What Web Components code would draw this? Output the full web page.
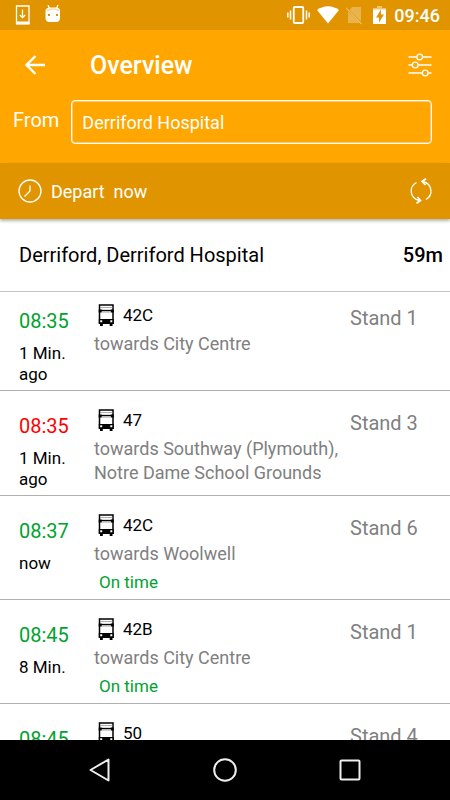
<!DOCTYPE html>
<html lang="en">
<head>
<meta charset="UTF-8">
<meta name="viewport" content="width=device-width, initial-scale=1">
<title>Overview</title>
<style>
    body {
        margin: 0;
        height: 100vh;
        display: flex;
        flex-direction: column;
        overflow: hidden;
        background-color: #fff;
        color: #000;
        font-family: Roboto, "Liberation Sans", sans-serif;
    }
    main {
        flex: 1;
        min-height: 0;
        overflow: hidden;
    }
</style>
</head>
<body>
    <status-bar>09:46</status-bar>
    <search-header value="Derriford Hospital">
        <span slot="title">Overview</span>
        <span slot="label">From</span>
    </search-header>
    <depart-bar>Depart&nbsp; now</depart-bar>
    <main>
        <stop-heading>
            <span slot="name">Derriford, Derriford Hospital</span>
            <span slot="distance">59m</span>
        </stop-heading>
        <departure-row time="08:35" line="42C" stand="Stand 1">
            <span slot="wait">1 Min. ago</span>
            <span slot="direction">towards City Centre</span>
        </departure-row>
        <departure-row time="08:35" line="47" stand="Stand 3" late>
            <span slot="wait">1 Min. ago</span>
            <span slot="direction">towards Southway (Plymouth), Notre Dame School Grounds</span>
        </departure-row>
        <departure-row time="08:37" line="42C" stand="Stand 6">
            <span slot="wait">now</span>
            <span slot="direction">towards Woolwell</span>
            <span slot="status">On time</span>
        </departure-row>
        <departure-row time="08:45" line="42B" stand="Stand 1">
            <span slot="wait">8 Min.</span>
            <span slot="direction">towards City Centre</span>
            <span slot="status">On time</span>
        </departure-row>
        <departure-row time="08:45" line="50" stand="Stand 4"></departure-row>
    </main>
    <nav-bar></nav-bar>

<script>
class StatusBar extends HTMLElement {
    constructor() {
        super();
        this.attachShadow({ mode: 'open' });

        this.shadowRoot.innerHTML = `
            <style>
                :host {
                    display: flex;
                    align-items: center;
                    justify-content: space-between;
                    flex: none;
                    height: 30px;
                    padding: 0 10px 0 15px;
                    background-color: #e09400;
                    color: #fff;
                    font-size: 18px;
                    font-weight: 500;
                }
                .group {
                    display: flex;
                    align-items: center;
                }
                .left { gap: 14px; }
                .right { gap: 7px; }
                svg { display: block; }
            </style>
            <div class="group left">
                <svg width="16" height="20" viewBox="0 0 16 20" fill="none" stroke="#fff">
                    <path d="M1.500 1v17.500h12.500V1z" stroke-width="1.300"/>
                    <path d="M1 16.500h13.500v3H1z" fill="#fff" stroke="none"/>
                    <path d="M7.500 4.500v8M4.800 10l2.700 2.700 2.700-2.700" stroke-width="1.300"/>
                </svg>
                <svg width="16" height="20" viewBox="0 0 16 20">
                    <path d="M3 0l1.500 3.500M13 0l-1.500 3.500" stroke="#fff" stroke-width="1.200"/>
                    <path d="M.5 6Q.5 3 4 2.500h8q3 .5 3 3.500v7q0 4-4 4h-6.500q-4 0-4-4z" fill="#fff"/>
                    <path d="M2 5.500q6-3 12 0" stroke="#fcd9a0" stroke-width="1.500" fill="none"/>
                    <path d="M3 9h2v2H3zM11 9h2v2h-2z" fill="#e09400"/>
                </svg>
            </div>
            <div class="group right">
                <svg width="23" height="20" viewBox="0 0 23 20" fill="none" stroke="#fff">
                    <rect x="6.750" y="2" width="9.500" height="16" rx="1" stroke-width="1.800"/>
                    <path d="M3.500 5.500v9M19.500 5.500v9M.8 7.500v5M22.200 7.500v5" stroke-width="1.500"/>
                </svg>
                <svg width="22" height="20" viewBox="0 0 22 20">
                    <path d="M11 18.500L0 5Q11-2.500 22 5z" fill="#fff"/>
                </svg>
                <svg width="17" height="20" viewBox="0 0 17 20">
                    <path d="M6 2h9v16H2V7z" fill="#fff" opacity=".3"/>
                    <path d="M0 3l16 16" stroke="#e09400" stroke-width="2"/>
                    <path d="M0 3l15.500 16" stroke="#fff" stroke-width="1.200" opacity=".4"/>
                </svg>
                <svg width="17" height="20" viewBox="-3 0 17 20">
                    <path d="M4 1h5v2h4v3H0V3h4z" fill="#fff" opacity=".45"/>
                    <path d="M0 4.500h13V19H0z" fill="#fff"/>
                    <path d="M8 4.500L3 12.500h3v5l5-8H8z" fill="#e09400"/>
                </svg>
                <slot></slot>
            </div>
        `;
    }
}

class SearchHeader extends HTMLElement {
    constructor() {
        super();
        this.attachShadow({ mode: 'open' });

        this.shadowRoot.innerHTML = `
            <style>
                :host {
                    display: block;
                    flex: none;
                    background-color: #ffa600;
                    color: #fff;
                }
                .toolbar {
                    display: flex;
                    align-items: center;
                    height: 70px;
                    padding: 0 17px 0 24px;
                }
                h1 {
                    flex: 1;
                    margin: 0 0 0 44px;
                    font-size: 25px;
                    font-weight: 500;
                }
                button {
                    padding: 0;
                    border: 0;
                    background: none;
                }
                svg { display: block; }
                .field {
                    display: flex;
                    align-items: flex-start;
                    gap: 12px;
                    padding: 0 18px 19px 13px;
                }
                label {
                    font-size: 20px;
                    line-height: 40px;
                }
                input {
                    flex: 1;
                    min-width: 0;
                    height: 44px;
                    box-sizing: border-box;
                    padding: 0 10px;
                    border: 1px solid #fff;
                    border-radius: 4px;
                    box-shadow: inset 0 0 0 1px rgba(255, 255, 255, 0.4);
                    background: none;
                    color: inherit;
                    font: 18px Roboto, "Liberation Sans", sans-serif;
                }
            </style>
            <div class="toolbar">
                <button aria-label="Back">
                    <svg width="22" height="22" viewBox="0 0 22 22" fill="none" stroke="#fff" stroke-width="2.400">
                        <path d="M21 11H3M11.500 2L2.500 11l9 9"/>
                    </svg>
                </button>
                <h1><slot name="title"></slot></h1>
                <button aria-label="Filter">
                    <svg width="26" height="24" viewBox="0 0 26 24" fill="none" stroke="#fff" stroke-width="1.400">
                        <path d="M1.500 4h8M16 4h8.500M1.500 12h3.500M11.500 12h13M1.500 20h13.500M21.500 20h3"/>
                        <circle cx="12.700" cy="4" r="2.900"/>
                        <circle cx="8.200" cy="12" r="2.900"/>
                        <circle cx="18.200" cy="20" r="2.900"/>
                    </svg>
                </button>
            </div>
            <div class="field">
                <label for="from"><slot name="label"></slot></label>
                <input id="from" type="text">
            </div>
        `;
    }

    connectedCallback() {
        this.shadowRoot.querySelector('input').value = this.getAttribute('value');
    }
}

class DepartBar extends HTMLElement {
    constructor() {
        super();
        this.attachShadow({ mode: 'open' });

        this.shadowRoot.innerHTML = `
            <style>
                :host {
                    display: flex;
                    align-items: center;
                    justify-content: space-between;
                    flex: none;
                    height: 56px;
                    padding: 0 17px 0 18px;
                    background-color: #e09400;
                    box-shadow: 0 2px 3px rgba(0, 0, 0, 0.3);
                    color: #fff;
                    z-index: 1;
                }
                button {
                    display: flex;
                    align-items: center;
                    gap: 9px;
                    padding: 0;
                    border: 0;
                    background: none;
                    color: inherit;
                    font: 18px Roboto, "Liberation Sans", sans-serif;
                }
                svg { display: block; }
            </style>
            <button>
                <svg width="24" height="24" viewBox="0 0 24 24" fill="none" stroke="#fff" stroke-width="1.300">
                    <circle cx="12" cy="12" r="11"/>
                    <path d="M12 6.500V12l-5.500 5.500"/>
                </svg>
                <span><slot></slot></span>
            </button>
            <button aria-label="Refresh">
                <svg width="24" height="26" viewBox="0 0 24 26" fill="none" stroke="#fff" stroke-width="1.300">
                    <path d="M7.500 4.500C0 8.500 0 20 10.500 22.500M17 21.500C24.500 17 23.500 6 14 3.500"/>
                    <path d="M17 .8L13 3.500l3.500 3.500M7.500 25.200l4-2.700L8.500 19" stroke-width="1.700"/>
                </svg>
            </button>
        `;
    }
}

class StopHeading extends HTMLElement {
    constructor() {
        super();
        this.attachShadow({ mode: 'open' });

        this.shadowRoot.innerHTML = `
            <style>
                :host {
                    display: flex;
                    align-items: center;
                    justify-content: space-between;
                    height: 72px;
                    padding: 0 7px 0 19px;
                    border-bottom: 1px solid #c4c4c4;
                    font-size: 20px;
                }
                ::slotted([slot="distance"]) { font-weight: 500; }
            </style>
            <slot name="name"></slot>
            <slot name="distance"></slot>
        `;
    }
}

class DepartureRow extends HTMLElement {
    constructor() {
        super();
        this.attachShadow({ mode: 'open' });

        this.shadowRoot.innerHTML = `
            <style>
                :host {
                    display: grid;
                    grid-template-columns: 75px 1fr 100px;
                    align-items: start;
                    padding: 16px 0 5px 19px;
                    border-bottom: 1px solid #b0b0b0;
                    font-size: 17px;
                }
                :host(:first-of-type) { padding-top: 10px; }
                .time {
                    padding-top: 7px;
                    color: #00a22d;
                    font-size: 20px;
                    line-height: 24px;
                }
                :host([late]) .time { color: #f00; }
                .wait {
                    margin-top: 10px;
                    line-height: 21px;
                }
                .line {
                    display: flex;
                    align-items: center;
                    gap: 8px;
                    height: 25px;
                    padding-left: 4px;
                }
                .direction {
                    margin-top: 5px;
                    color: #808080;
                    font-size: 18px;
                    line-height: 24px;
                }
                .status {
                    margin: 4px 0 0 5px;
                    color: #00a22d;
                    line-height: 24px;
                }
                .stand {
                    padding-top: 4px;
                    color: #808080;
                    font-size: 20px;
                    line-height: 24px;
                }
            </style>
            <div>
                <div class="time"></div>
                <div class="wait"><slot name="wait"></slot></div>
            </div>
            <div>
                <div class="line">
                    <svg width="17" height="22" viewBox="0 0 17 22">
                        <path d="M1.500 1h13.500v18H1.500z" fill="#fff" stroke="#000" stroke-width="1.500"/>
                        <path d="M2 3.500h12.500" stroke="#999" stroke-width=".8"/>
                        <path d="M.7 5.500h3V8.500h-3zM12.800 5.500h3V8.500h-3z"/>
                        <path d="M3 6.500h10.500" stroke="#000" stroke-width="1.300"/>
                        <path d="M4 8h8.500" stroke="#888" stroke-width=".8"/>
                        <path d="M.8 15h15v5H.8zM2 19.500h2.800V22H2zM11.700 19.500h2.800V22h-2.800z"/>
                        <path d="M2.200 16.200h2v2h-2zM12.300 16.200h2v2h-2z" fill="#fff"/>
                    </svg>
                    <span class="number"></span>
                </div>
                <div class="direction"><slot name="direction"></slot></div>
                <div class="status"><slot name="status"></slot></div>
            </div>
            <div class="stand"></div>
        `;
    }

    connectedCallback() {
        this.shadowRoot.querySelector('.time').textContent = this.getAttribute('time');
        this.shadowRoot.querySelector('.number').textContent = this.getAttribute('line');
        this.shadowRoot.querySelector('.stand').textContent = this.getAttribute('stand');
    }
}

class NavBar extends HTMLElement {
    constructor() {
        super();
        this.attachShadow({ mode: 'open' });

        this.shadowRoot.innerHTML = `
            <style>
                :host {
                    display: flex;
                    align-items: center;
                    justify-content: center;
                    gap: 101px;
                    flex: none;
                    height: 60px;
                    background-color: #000;
                }
                button {
                    padding: 0;
                    border: 0;
                    background: none;
                }
                svg { display: block; }
            </style>
            <button aria-label="Back">
                <svg width="24" height="24" viewBox="0 0 24 24" fill="none" stroke="#eee" stroke-width="2" stroke-linejoin="round">
                    <path d="M20.500 1.500v21L2.500 12z"/>
                </svg>
            </button>
            <button aria-label="Home">
                <svg width="24" height="24" viewBox="0 0 24 24" fill="none" stroke="#eee" stroke-width="2">
                    <circle cx="12" cy="12" r="10.800"/>
                </svg>
            </button>
            <button aria-label="Recent apps">
                <svg width="24" height="24" viewBox="0 0 24 24" fill="none" stroke="#eee" stroke-width="2">
                    <rect x="2.500" y="2.500" width="19" height="19" rx="1"/>
                </svg>
            </button>
        `;
    }
}

customElements.define('status-bar', StatusBar);
customElements.define('search-header', SearchHeader);
customElements.define('depart-bar', DepartBar);
customElements.define('stop-heading', StopHeading);
customElements.define('departure-row', DepartureRow);
customElements.define('nav-bar', NavBar);
</script>
</body>
</html>
